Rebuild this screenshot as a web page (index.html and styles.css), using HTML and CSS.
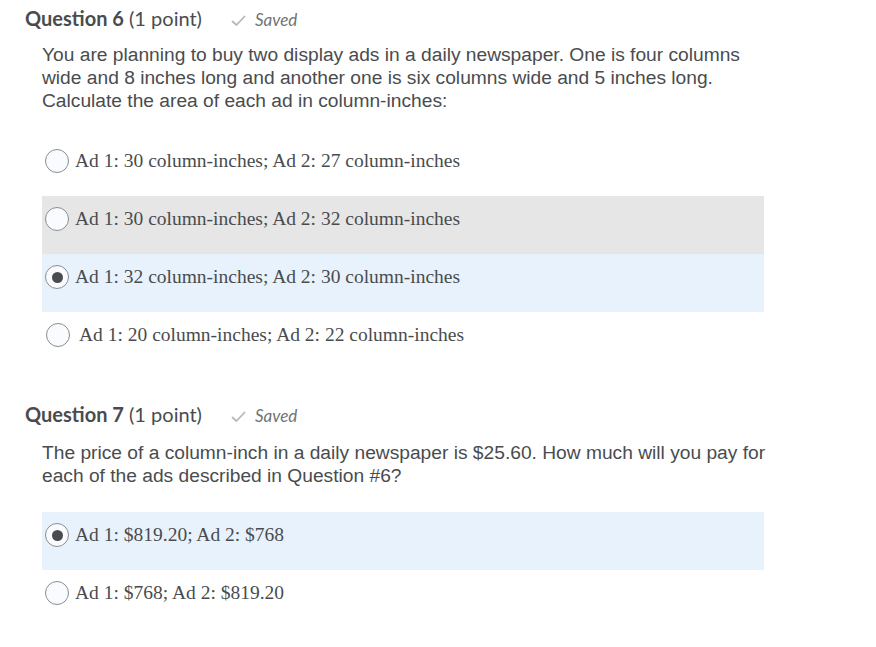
FILE: index.html
```html
<!DOCTYPE html>
<html>
<head>
<meta charset="utf-8">
<link rel="stylesheet" href="styles.css">
</head>
<body>
<div class="page">
  <section class="question q6">
    <h2 class="q-header"><span class="q-title">Question 6</span> <span class="q-points">(1 point)</span><span class="saved"><svg class="check" width="15" height="12" viewBox="0 0 15 12"><path d="M1.5 6.5 L5.5 10 L13.5 1.5" fill="none" stroke="#b5b8ba" stroke-width="1.8" stroke-linecap="round" stroke-linejoin="round"/></svg><em>Saved</em></span></h2>
    <p class="q-text">You are planning to buy two display ads in a daily newspaper. One is four columns wide and 8 inches long and another one is six columns wide and 5 inches long. Calculate the area of each ad in column-inches:</p>
    <ul class="options">
      <li class="option"><span class="radio"></span><span class="label">Ad 1: 30 column-inches; Ad 2: 27 column-inches</span></li>
      <li class="option hover"><span class="radio"></span><span class="label">Ad 1: 30 column-inches; Ad 2: 32 column-inches</span></li>
      <li class="option selected"><span class="radio checked"></span><span class="label">Ad 1: 32 column-inches; Ad 2: 30 column-inches</span></li>
      <li class="option shifted"><span class="radio"></span><span class="label">Ad 1: 20 column-inches; Ad 2: 22 column-inches</span></li>
    </ul>
  </section>
  <section class="question q7">
    <h2 class="q-header"><span class="q-title">Question 7</span> <span class="q-points">(1 point)</span><span class="saved"><svg class="check" width="15" height="12" viewBox="0 0 15 12"><path d="M1.5 6.5 L5.5 10 L13.5 1.5" fill="none" stroke="#b5b8ba" stroke-width="1.8" stroke-linecap="round" stroke-linejoin="round"/></svg><em>Saved</em></span></h2>
    <p class="q-text">The price of a column-inch in a daily newspaper is $25.60. How much will you pay for each of the ads described in Question #6?</p>
    <ul class="options">
      <li class="option selected"><span class="radio checked"></span><span class="label">Ad 1: $819.20; Ad 2: $768</span></li>
      <li class="option"><span class="radio"></span><span class="label">Ad 1: $768; Ad 2: $819.20</span></li>
    </ul>
  </section>
</div>
</body>
</html>
```

FILE: styles.css
```css
html, body {
  margin: 0;
  padding: 0;
  background: #ffffff;
}

.page {
  padding: 6px 0 0 25px;
  width: 739px;
}

.question {
  margin: 0;
}

.q7 {
  margin-top: 32px;
}

.q-header {
  margin: 0;
  height: 24px;
  line-height: 24px;
  font-family: Lato, "Noto Sans", sans-serif;
  font-size: 20px;
  font-weight: normal;
  color: #494c4e;
  white-space: nowrap;
}

.q-title {
  font-weight: bold;
}

.saved {
  display: inline-block;
  margin-left: 29px;
  font-size: 17px;
  color: #6e7376;
}

.check {
  margin-right: 9px;
  vertical-align: -1px;
}

.saved em {
  font-style: italic;
}

.q-text {
  margin: 13px 0 0 17px;
  width: 730px;
  font-family: "Liberation Sans", Arial, sans-serif;
  font-size: 19.2px;
  line-height: 23px;
  color: #494c4e;
}

.q7 .q-text {
  margin-top: 15px;
}

.options {
  list-style: none;
  margin: 26px 0 0 17px;
  padding: 0;
  width: 722px;
}

.q7 .options {
  margin-top: 25px;
}

.option {
  height: 58px;
  box-sizing: border-box;
  padding: 11px 0 0 3px;
  display: flex;
  align-items: center;
  align-content: flex-start;
  flex-wrap: wrap;
}

.option.hover {
  background: #e6e6e6;
}

.option.selected {
  background: #e8f2fc;
}

.radio {
  width: 22px;
  height: 22px;
  border: 1px solid #8a8d90;
  border-radius: 50%;
  background: #f9fbff;
  display: flex;
  align-items: center;
  justify-content: center;
  flex: none;
}

.radio.checked::after {
  content: "";
  width: 11px;
  height: 11px;
  border-radius: 50%;
  background: #494c4e;
}

.label {
  margin-left: 6px;
  font-family: "Liberation Serif", "Times New Roman", serif;
  font-size: 19.5px;
  line-height: 24px;
  color: #494c4e;
}

.option.shifted .radio {
  margin-left: 1px;
}

.option.shifted .label {
  margin-left: 9px;
}
```
